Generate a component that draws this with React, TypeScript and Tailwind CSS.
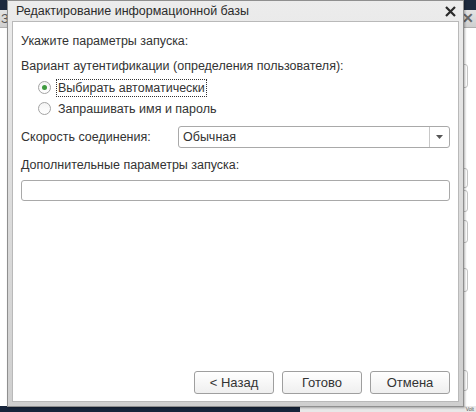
import React from "react"

const font = { fontFamily: '"Liberation Sans", Arial, sans-serif' }

function Radio({ checked, label, focused }: { checked?: boolean; label: string; focused?: boolean }) {
  return (
    <label className="flex items-center h-[21px] pl-[17px]">
      <span className="w-[13px] h-[13px] rounded-full border border-[#a3a3a3] bg-gradient-to-b from-[#f4f4f4] to-white flex items-center justify-center shrink-0">
        {checked && <span className="w-[5px] h-[5px] rounded-full bg-[#3e9a3e]" />}
      </span>
      <span
        className={
          "ml-[6px] leading-[16px] px-[1px] " +
          (focused ? "outline outline-1 outline-dotted outline-[#333]" : "")
        }
      >
        {label}
      </span>
    </label>
  )
}

function Button({ children }: { children: React.ReactNode }) {
  return (
    <button className="w-[80px] h-[23px] rounded-[3px] border border-[#9f9f9f] bg-gradient-to-b from-white to-[#efefef] text-[13px] text-[#333]">
      {children}
    </button>
  )
}

export default function App() {
  return (
    <div className="relative w-[476px] h-[412px] bg-white overflow-hidden text-[#333]" style={font}>
      {/* окно позади */}
      <div className="h-[10px] bg-[#1d2a3e]" />
      <div className="h-[18px] bg-gradient-to-b from-[#e4e4e4] to-[#cfcfcf] border-b border-[#b0b0b0] flex items-center justify-between px-[1px]">
        <span className="text-[13px] text-[#555]">З</span>
        <span className="text-[14px] text-[#666] font-bold mr-[1px]">✕</span>
      </div>
      <div className="absolute right-[8px] top-[64px] w-[20px] h-[24px] border border-[#c4c4c4] rounded-[3px]" />
      <div className="absolute right-[8px] top-[168px] w-[20px] h-[20px] border border-[#c4c4c4] rounded-[3px]" />
      <div className="absolute right-[8px] top-[190px] w-[20px] h-[22px] border border-[#c4c4c4] rounded-[3px]" />
      <div className="absolute right-[8px] top-[220px] w-[20px] h-[23px] border border-[#c4c4c4] rounded-[3px]" />
      <div className="absolute right-[8px] top-[268px] w-[20px] h-[24px] border border-[#c4c4c4] rounded-[3px]" />
      <div className="absolute right-[8px] top-[370px] w-[20px] h-[21px] border border-[#c4c4c4] rounded-[3px]" />
      <div className="absolute left-0 right-0 bottom-0 h-[6px] flex">
        <div className="w-[300px] bg-[#16243a]" />
        <div className="flex-1 bg-[#e8e8e8] text-[5px] leading-[6px] text-right pr-[2px] text-[#555] overflow-hidden">Volt</div>
      </div>

      {/* диалог */}
      <div className="absolute left-[7px] top-0 w-[457px] h-[407px] border border-[#8f8f8f] bg-gradient-to-b from-[#ececec] via-[#dcdcdc] to-[#cfcfcf] flex flex-col shadow-[1px_1px_2px_rgba(0,0,0,0.3)]">
        <div className="h-[20px] flex items-center justify-between pl-[8px] pr-[7px]">
          <span className="text-[12.5px] text-[#2b2b2b]">Редактирование информационной базы</span>
          <svg width="11" height="11" viewBox="0 0 11 11" className="mt-[1px]">
            <path d="M1 1 L10 10 M10 1 L1 10" stroke="#2a2a2a" strokeWidth="2.2" />
          </svg>
        </div>
        <div className="mx-[4px] mb-[4px] flex-1 bg-white border border-[#b9b9b9] flex flex-col px-[8px] pt-[10px] pb-[7px] text-[12.5px]">
          <div className="leading-[18px]">Укажите параметры запуска:</div>
          <div className="leading-[18px] mt-[7px]">Вариант аутентификации (определения пользователя):</div>
          <div className="mt-[2px]">
            <Radio checked focused label="Выбирать автоматически" />
            <Radio label="Запрашивать имя и пароль" />
          </div>
          <div className="flex items-center mt-[7px]">
            <span className="w-[157px] leading-[18px]">Скорость соединения:</span>
            <div className="flex-1 h-[22px] border border-[#a9a9a9] rounded-[3px] flex items-center">
              <span className="flex-1 pl-[4px]">Обычная</span>
              <div className="w-[20px] h-full border-l border-[#c8c8c8] flex items-center justify-center">
                <svg width="7" height="4" viewBox="0 0 7 4">
                  <path d="M0 0 H7 L3.5 4 Z" fill="#555" />
                </svg>
              </div>
            </div>
          </div>
          <div className="leading-[18px] mt-[8px]">Дополнительные параметры запуска:</div>
          <div className="h-[21px] mt-[6px] border border-[#a9a9a9] rounded-[3px]" />
          <div className="flex-1" />
          <div className="flex justify-end gap-[8px]">
            <Button>&lt; Назад</Button>
            <Button>Готово</Button>
            <Button>Отмена</Button>
          </div>
        </div>
      </div>
    </div>
  )
}
